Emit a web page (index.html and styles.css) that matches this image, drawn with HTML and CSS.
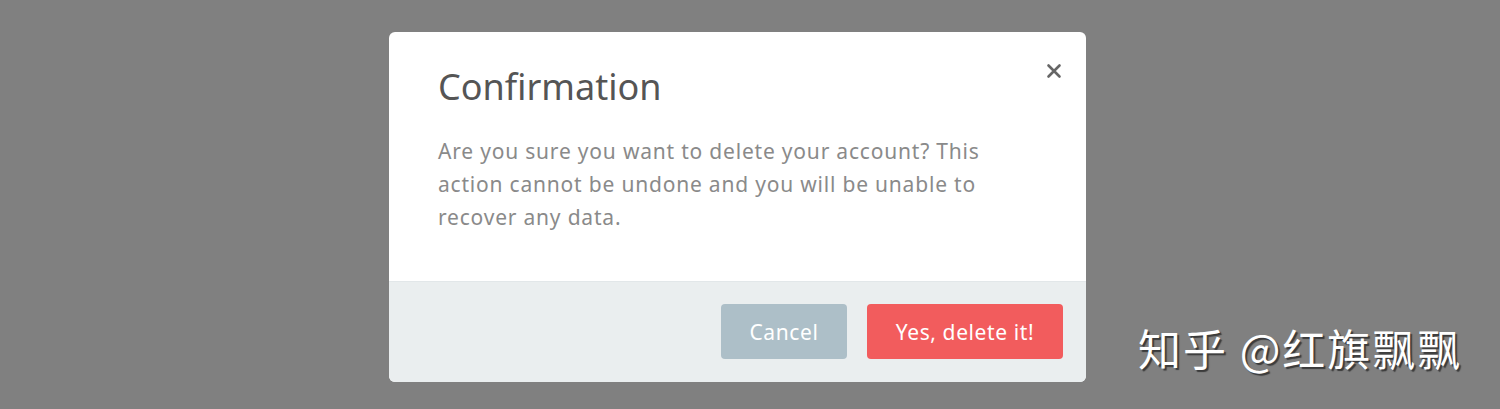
FILE: index.html
```html
<!DOCTYPE html>
<html lang="en">
<head>
<meta charset="utf-8">
<title>Confirmation</title>
<link rel="stylesheet" href="styles.css">
</head>
<body>
<div class="stage">
  <div class="modal">
    <div class="modal-body">
      <button class="close" aria-label="Close">
        <svg width="16" height="16" viewBox="0 0 16 16"><path d="M2.5 2.5 L13.5 13.5 M13.5 2.5 L2.5 13.5" stroke="#666" stroke-width="2.6" stroke-linecap="round"/></svg>
      </button>
      <h1 class="title">Confirmation</h1>
      <p class="text">Are you sure you want to delete your account? This action cannot be undone and you will be unable to recover any data.</p>
    </div>
    <div class="modal-footer">
      <button class="btn btn-cancel">Cancel</button>
      <button class="btn btn-danger">Yes, delete it!</button>
    </div>
  </div>
  <div class="watermark">知乎 @红旗飘飘</div>
</div>
</body>
</html>
```
FILE: styles.css
```css
html, body {
  margin: 0;
  padding: 0;
  background: #808080;
}
.stage {
  position: relative;
  width: 1500px;
  height: 409px;
  padding-top: 32px;
  box-sizing: border-box;
  font-family: "Noto Sans", "Open Sans", sans-serif;
}
.modal {
  margin-left: 389px;
  width: 697px;
  background: #fff;
  border-radius: 6px;
  overflow: hidden;
}
.modal-body {
  position: relative;
  height: 249px;
  box-sizing: border-box;
  padding: 30px 49px 0 49px;
}
.close {
  position: absolute;
  top: 31px;
  right: 24px;
  width: 16px;
  height: 16px;
  padding: 0;
  border: 0;
  background: none;
  display: flex;
}
.title {
  margin: 0;
  font-size: 36px;
  font-weight: 400;
  line-height: 50px;
  color: #555;
}
.text {
  margin: 23px 0 0;
  font-size: 21px;
  letter-spacing: 0.8px;
  line-height: 33px;
  color: #8a8a8a;
  width: 550px;
}
.modal-footer {
  background: #eaeeef;
  border-top: 1px solid #e2e7e9;
  height: 101px;
  box-sizing: border-box;
  padding: 22px 23px;
  display: flex;
  justify-content: flex-end;
  gap: 20px;
}
.btn {
  height: 55px;
  border: 0;
  border-radius: 4px;
  color: #fff;
  font-family: "Noto Sans", "Open Sans", sans-serif;
  font-size: 21px;
  letter-spacing: 0.6px;
  padding: 0;
}
.btn-cancel {
  width: 126px;
  background: #adbfc8;
}
.btn-danger {
  width: 196px;
  background: #f25c5d;
}
.watermark {
  position: absolute;
  left: 1138px;
  top: 319px;
  font-family: "Noto Sans CJK SC", sans-serif;
  font-size: 43px;
  letter-spacing: 2px;
  line-height: 56px;
  color: #fff;
  text-shadow: 2px 2px 1px #3a3a3a;
}
```
